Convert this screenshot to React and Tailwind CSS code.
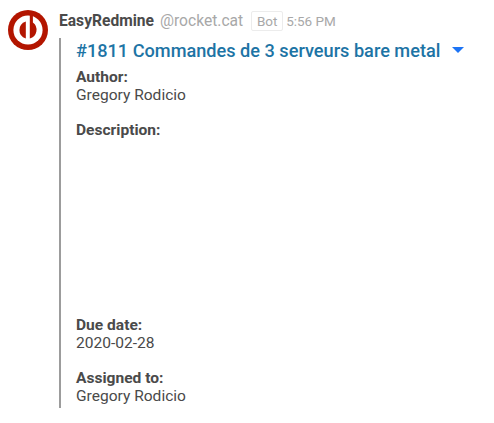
function Logo() {
  return (
    <svg className="block h-10 w-10 shrink-0" viewBox="0 0 40 40" aria-hidden="true">
      <circle cx="20" cy="20" r="20" fill="#b31500" />
      <circle cx="20" cy="20" r="14.6" fill="#fff" />
      <path d="M17.8 11.4a9 9 0 0 0 0 17.2z" fill="#b31500" />
      <path d="M21.8 4h3.1v8.4a9.2 9.2 0 0 1-3.1 16.2z" fill="#b31500" />
    </svg>
  );
}

function Field({ label, value }) {
  return (
    <div>
      <div className="font-bold">{label}</div>
      {value && <div>{value}</div>}
    </div>
  );
}

export default function App() {
  return (
    <div className="flex h-[423px] w-[494px] bg-white pt-2.5 pl-2 font-['Roboto',sans-serif] text-[#4a4a4a]">
      <Logo />
      <div className="ml-[11px] flex-1">
        <div className="flex h-[22px] items-center whitespace-nowrap text-[15.6px] leading-[22px]">
          <span className="font-bold">EasyRedmine</span>
          <span className="ml-1.5 text-[#a8a8a8]">@rocket.cat</span>
          <span className="ml-2 h-5 w-8 rounded-xs border border-[#ececec] text-center text-[13.5px] leading-[18px] text-[#a8a8a8]">Bot</span>
          <span className="ml-[3px] text-[13.5px] text-[#a8a8a8]">5:56 PM</span>
        </div>
        <div className="mt-1.5 h-[370px] border-l-2 border-[#9c9c9c] pl-[15px]">
          <div className="flex h-[30.75px] items-center pb-1.5">
            <a className="whitespace-nowrap text-[18.15px] font-medium text-[#1d74a5]">#1811 Commandes de 3 serveurs bare metal</a>
            <span className="ml-[11.5px] border-x-[6px] border-t-[6px] border-x-transparent border-t-[#1d74f5]" />
          </div>
          <div className="flex flex-col text-[15.55px] leading-[17.75px]">
            <Field label="Author:" value="Gregory Rodicio" />
            <div className="mt-[17.75px] h-[195px]">
              <Field label="Description:" />
            </div>
            <Field label="Due date:" value="2020-02-28" />
            <div className="mt-[17.75px]">
              <Field label="Assigned to:" value="Gregory Rodicio" />
            </div>
          </div>
        </div>
      </div>
    </div>
  );
}
